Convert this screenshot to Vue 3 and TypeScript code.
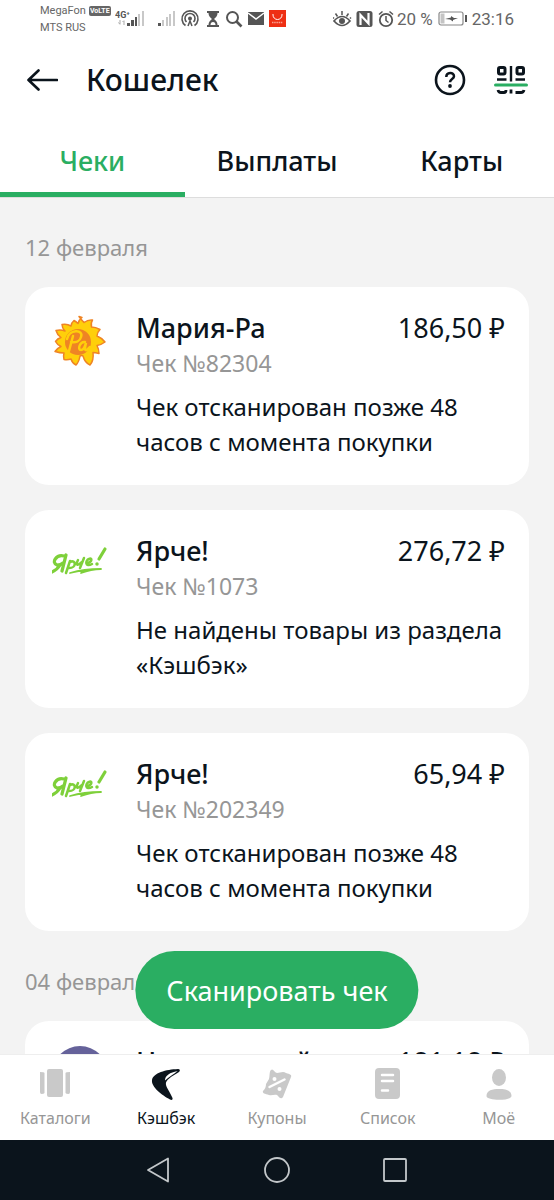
<script setup lang="ts">
import { ref } from 'vue'

type Brand = 'maria' | 'yarche' | 'plain'

interface Receipt {
  id: number
  brand: Brand
  store: string
  number: string
  amount: string
  message: string
}

interface ReceiptGroup {
  date: string
  receipts: Receipt[]
}

const tabs: string[] = ['Чеки', 'Выплаты', 'Карты']
const activeTab = ref<string>('Чеки')

const groups: ReceiptGroup[] = [
  {
    date: '12 февраля',
    receipts: [
      { id: 1, brand: 'maria', store: 'Мария-Ра', number: '82304', amount: '186,50 ₽', message: 'Чек отсканирован позже 48 часов с момента покупки' },
      { id: 2, brand: 'yarche', store: 'Ярче!', number: '1073', amount: '276,72 ₽', message: 'Не найдены товары из раздела «Кэшбэк»' },
      { id: 3, brand: 'yarche', store: 'Ярче!', number: '202349', amount: '65,94 ₽', message: 'Чек отсканирован позже 48 часов с момента покупки' },
    ],
  },
  {
    date: '04 февраля',
    receipts: [
      { id: 4, brand: 'plain', store: 'Новоторский', number: '1048', amount: '181,18 ₽', message: 'Чек отсканирован позже 48 часов с момента покупки' },
    ],
  },
]

const sections: string[] = ['Каталоги', 'Кэшбэк', 'Купоны', 'Список', 'Моё']
const activeSection = ref<string>('Кэшбэк')
</script>

<template>
  <div class="screen">
    <div class="status">
      <div class="carriers">
        <div class="carrier">MegaFon <span class="volte">VoLTE</span></div>
        <div class="carrier">MTS RUS</div>
      </div>
      <svg class="signals" width="172" height="22" viewBox="0 0 172 22">
        <text x="0" y="10" class="net">4G⁺</text>
        <path d="M5 12v4M3.500 14.500 5 16.500M9 17v-4M7.500 14 9 12.500" stroke="#aaa" fill="none" />
        <g fill="#555"><path d="M12 15h3v3h-3zM16 12h3v6h-3zM20 9h2v9h-2z" /></g>
        <path d="M23 6h2v12h-2zM27 3h2v15h-2z" fill="#c8c8c8" />
        <path d="M43 15h3v3h-3z" fill="#555" />
        <path d="M47 12h2v6h-2zM51 9h2v9h-2zM54 6h2v12h-2zM58 3h2v15h-2z" fill="#c8c8c8" />
        <g fill="none" stroke="#555" stroke-width="1.600">
          <path d="M70.500 17.500a8 8 0 1 1 9 0M71.500 14a5 5 0 1 1 7 0" />
          <path d="M73 18l2-5 2 5" stroke-width="1.500" />
        </g>
        <circle cx="75" cy="10.500" r="2" fill="#555" />
        <path d="M92 3h12v2h-1.500c0 3-1.500 4.500-3.500 6 2 1.500 3.500 3 3.500 6h1.500v2H92v-2h1.500c0-3 1.500-4.500 3.500-6-2-1.500-3.500-3-3.500-6H92z" fill="#555" />
        <path d="M95.500 17c0-2 1-3 2.500-3s2.500 1 2.500 3z" fill="#fff" />
        <circle cx="117.500" cy="9.500" r="5.500" fill="none" stroke="#555" stroke-width="2" />
        <path d="m121.500 13.500 5 5" stroke="#555" stroke-width="2.600" />
        <path d="M133 4h16v13h-16z" fill="#555" />
        <path d="m133 5 8 6 8-6" fill="none" stroke="#fff" stroke-width="1.500" />
        <path d="M154 2h17v17h-17z" fill="#ee2f14" />
        <path d="M158 6v1a4.500 4.500 0 0 0 9 0V6" fill="none" stroke="#fff" />
        <path d="M157 14.500h11" stroke="#f9a08f" stroke-width="1.500" stroke-dasharray="1.500 .7" />
      </svg>
      <svg class="toggles" width="62" height="20" viewBox="0 0 62 20">
        <path d="M1 12q8-9 16 0-8 9-16 0z" fill="none" stroke="#555" stroke-width="1.700" />
        <circle cx="9" cy="12" r="3" fill="#555" />
        <path d="M9 6V2M4.500 7.500 2.500 4.500M13.500 7.500l2-3M1 9.500l-1-1M17 9.500l1-1" stroke="#555" stroke-width="1.500" />
        <rect x="23.500" y="2" width="16" height="16" rx="2.500" fill="#555" />
        <path d="M27.500 16V6l8 8.500V4" fill="none" stroke="#fff" stroke-width="2.200" />
        <circle cx="53" cy="11" r="6.200" fill="none" stroke="#555" stroke-width="1.800" />
        <path d="M53 7v4.500l2.500 2M46 5.500l3.500-3M60 5.500l-3.500-3" fill="none" stroke="#555" stroke-width="1.500" />
      </svg>
      <span class="percent">20 %</span>
      <svg class="battery" width="30" height="16" viewBox="0 0 30 16">
        <rect x="1" y="1" width="24" height="13" rx="2" fill="none" stroke="#888" stroke-width="1.200" />
        <path d="M2.500 2.500h4v10h-4z" fill="#c4c4c4" />
        <path d="M27 4h2v7h-2z" fill="#555" />
        <path d="m7 8 6-1.500V5l3 2h4l-5 2v1.500L12 8.500z" fill="#555" />
      </svg>
      <span class="clock">23:16</span>
    </div>

    <header class="header">
      <button class="icon-button" type="button" aria-label="Назад">
        <svg width="32" height="24" viewBox="0 0 32 24"><path d="M31 12H3M12.500 2.500 2.500 12l10 9.500" fill="none" stroke="#0b141c" stroke-width="2.600" stroke-linecap="round" stroke-linejoin="round" /></svg>
      </button>
      <h1 class="title">Кошелек</h1>
      <button class="icon-button" type="button" aria-label="Помощь">
        <svg width="32" height="32" viewBox="0 0 32 32">
          <circle cx="16" cy="16" r="14" fill="none" stroke="#0b141c" stroke-width="2.600" />
          <path d="M12.300 13c0-5.300 7.700-5.300 7.700-.8 0 2.900-4 2.600-4 6" fill="none" stroke="#0b141c" stroke-width="2.500" />
          <circle cx="16" cy="22" r="1.900" fill="#0b141c" />
        </svg>
      </button>
      <button class="icon-button scan-icon" type="button" aria-label="Сканировать">
        <svg width="34" height="30" viewBox="0 0 34 30">
          <g fill="none" stroke="#0b141c" stroke-width="3">
            <rect x="4.500" y="2.500" width="6.500" height="6.500" rx="1.500" />
            <rect x="23" y="2.500" width="6.500" height="6.500" rx="1.500" />
            <path d="M17 1v15.500M3 14.500h9.500M21.500 14.500H31" stroke-width="2.400" />
            <path d="M4 25q.5 2.500 3 2.500h3q2 0 2-2.500M17 24.500v4M30 25q-.5 2.500-3 2.500h-5.500" stroke-width="2.800" />
          </g>
          <path d="M1.500 20h31" stroke="#2aae62" stroke-width="3" stroke-linecap="round" />
        </svg>
      </button>
    </header>

    <nav class="tabs">
      <button v-for="tab in tabs" :key="tab" type="button" class="tab" :class="{ active: tab === activeTab }" @click="activeTab = tab">{{ tab }}</button>
    </nav>

    <main class="content">
      <section v-for="group in groups" :key="group.date">
        <h2 class="date">{{ group.date }}</h2>
        <div class="cards">
          <article v-for="receipt in group.receipts" :key="receipt.id" class="card">
            <svg class="logo" viewBox="0 0 56 56">
              <template v-if="receipt.brand === 'maria'">
                <path d="M28 4.500q2 3 5 6 4-3 8.500-2.500-2 3-1 7 4 0 8.500 2.500-3 3-3 6.500 5 2 8 6-4 3-8 3.500 2 4 2 8-4-1-6-1 1 8-3 12.500-5-2-7-9-1-1-3 0-1 6-4 9-4-2-5-6-3 1-7 .5-1-3 0-6.500-4 0-9-1.500 2-3 6-5-4-2-5.500-5 2-3 5.500-4-4-3-5-7 5-1 9 .5-3-3-3-6.500 5-1 9 1.500 0-3 3-5.500 2 1 4 3 1-4 4-6z" transform="translate(-1 0)" fill="#ffcf0a" stroke="#ef8424" stroke-width="1.500" stroke-linejoin="round" />
                <circle cx="26" cy="30" r="13" fill="#ef8424" />
                <path d="M21 24l-4 15M15 27c2-10 17-10 14-2-1 4-5 6-10 5M33 30c-5-1-8 8-4 8 3 0 4-4 5-7-1 4-2 8 1 7l3-3" fill="none" stroke="#ffcf0a" stroke-width="2.500" stroke-linecap="round" />
              </template>
              <template v-else-if="receipt.brand === 'yarche'">
                <g transform="translate(-2 3)" fill="none" stroke="#7ed03a" stroke-linecap="round" stroke-linejoin="round">
                  <path d="M2 34q5-2 8-7M14 18c-8-2-13 7-7 9 3 0 5-1 6-2M16 17l-4 16" stroke-width="3.200" />
                  <path d="M20 23l-4 12M20 24c6-3 7 6-1 6M28 22c-3 6 0 6 4 2M34 20l-4 10M37 25c6-1 5-6 2-4-4 1-4 9 3 5" stroke-width="2.500" />
                  <path d="M55 11l-6 10" stroke-width="3.200" />
                  <path d="M47 26v.1" stroke-width="3.500" />
                  <path d="M20 35q14-4 31-4-10 0-20 4" stroke-width="1.800" />
                </g>
              </template>
              <circle v-else cx="28" cy="28" r="28" fill="#65629a" />
            </svg>
            <div class="details">
              <div class="line">
                <h3 class="store">{{ receipt.store }}</h3>
                <span class="amount">{{ receipt.amount }}</span>
              </div>
              <p class="number">Чек №{{ receipt.number }}</p>
              <p class="message">{{ receipt.message }}</p>
            </div>
          </article>
        </div>
      </section>
      <button class="scan" type="button">Сканировать чек</button>
    </main>

    <nav class="sections">
      <button v-for="(section, index) in sections" :key="section" type="button" class="section" :class="{ active: section === activeSection }" @click="activeSection = section">
        <svg width="34" height="34" viewBox="0 0 34 34" fill="currentColor">
          <template v-if="index === 0">
            <rect x="9" y="2" width="16" height="28" rx="2" />
            <path d="M2 5q4 0 4.500 1v20q-.5 1-3 1Q2 27 2 25zM32 5q-4 0-4.500 1v20q.5 1 3 1 1.500 0 1.500-2z" />
          </template>
          <template v-else-if="index === 1">
            <path d="M3 13C4 6 17 2.500 29 2c2 0 2.500 1.500 1 3-5 3-12 7-13 10.500-1 4 4 9 6.500 15.500.5 2-1 2.500-2.500 1.500C13 28 2 20 3 13z" />
            <path d="M16 13.500c0-5 5-8 12.500-9.500-3 3-9 6-12.500 9.500z" fill="#fff" />
          </template>
          <template v-else-if="index === 2">
            <path d="M11 3c2-2 3 2 6 3 3 0 6-2 9 0 4 1 6 2 5 4l-8 20c-2 3-4 0-6-2-3-1-5 1-8 0-4-1-7-2-6-4 2-2 3-4 3-7l3-5c1-3 0-7 2-9z" />
            <path d="m9.500 20 15-7.500" stroke="#fff" stroke-width="2.500" stroke-linecap="round" />
            <circle cx="14.500" cy="12" r="2" fill="#fff" /><circle cx="19.500" cy="22" r="2" fill="#fff" />
          </template>
          <template v-else-if="index === 3">
            <rect x="4" y="1" width="25" height="31" rx="4" />
            <path d="M11 8h11M11 14h11M11 23.500h6" stroke="#fff" stroke-width="2.500" stroke-linecap="round" />
          </template>
          <template v-else>
            <ellipse cx="17" cy="10.500" rx="7" ry="8.500" />
            <path d="M4.500 29c0-6 6-7 12.500-7s12.500 1 12.500 7c0 5-25 5-25 0z" />
          </template>
        </svg>
        <span>{{ section }}</span>
      </button>
    </nav>

    <div class="system">
      <button class="icon-button" type="button" aria-label="Системная кнопка назад">
        <svg width="26" height="28" viewBox="0 0 26 28"><path d="M22 2.500v23L2 14z" fill="none" stroke="#c3c7ca" stroke-width="1.800" stroke-linejoin="round" /></svg>
      </button>
      <button class="icon-button" type="button" aria-label="Домой">
        <svg width="28" height="28" viewBox="0 0 28 28"><circle cx="14" cy="14" r="12" fill="none" stroke="#c3c7ca" stroke-width="1.800" /></svg>
      </button>
      <button class="icon-button" type="button" aria-label="Недавние">
        <svg width="26" height="28" viewBox="0 0 26 28"><rect x="2" y="3" width="22" height="22" rx="1" fill="none" stroke="#c3c7ca" stroke-width="1.800" /></svg>
      </button>
    </div>
  </div>
</template>

<style>
body {
  margin: 0;
}
</style>

<style scoped>
.screen {
  display: flex;
  flex-direction: column;
  height: 100vh;
  overflow: hidden;
  background: #fff;
  color: #0b141c;
  font-family: "Noto Sans", sans-serif;
}
button {
  padding: 0;
  border: 0;
  background: none;
  color: inherit;
  font: inherit;
}
h1, h2, h3, p {
  margin: 0;
}
svg {
  display: block;
  flex: none;
}
.status {
  display: flex;
  align-items: center;
  box-sizing: border-box;
  height: 38px;
  padding: 0 40px;
  font-family: Roboto, sans-serif;
  color: #666;
}
.carriers {
  width: 75px;
  font-size: 11px;
  line-height: 17px;
}
.carrier {
  display: flex;
  align-items: center;
  gap: 3px;
  white-space: nowrap;
}
.volte {
  border-radius: 2px;
  background: #666;
  color: #fff;
  font-size: 7px;
  font-weight: 700;
  line-height: 10px;
  padding: 0 1px;
}
.net {
  font: 700 9px Roboto, sans-serif;
  fill: #555;
}
.toggles {
  margin-left: auto;
}
.percent,
.clock {
  font-size: 17px;
  white-space: nowrap;
}
.percent {
  margin: 0 5px 0 2px;
}
.clock {
  margin-left: 4px;
}
.header {
  display: flex;
  align-items: center;
  height: 84px;
  padding: 0 26px;
}
.title {
  flex: 1;
  margin-left: 28px;
  font-size: 30px;
  font-weight: 500;
  line-height: 40px;
}
.scan-icon {
  margin-left: 28px;
}
.tabs {
  display: flex;
  height: 75px;
  border-bottom: 1px solid #ddd;
}
.tab {
  flex: 1;
  padding-top: 6px;
  border-bottom: 5px solid transparent;
  font-size: 27px;
  font-weight: 500;
}
.tab.active {
  border-color: #2aae62;
  color: #2aae62;
}
.content {
  position: relative;
  flex: 1;
  min-height: 0;
  overflow: hidden;
  padding: 0 25px;
  background: #f3f3f3;
}
.date {
  padding: 33px 0 24px;
  color: #969696;
  font-size: 22px;
  font-weight: 400;
  line-height: 32px;
}
.cards {
  display: flex;
  flex-direction: column;
  gap: 25px;
  padding-bottom: 1px;
}
.card {
  display: flex;
  gap: 28px;
  padding: 22px 24px 26px 27px;
  border-radius: 24px;
  background: #fff;
}
.logo {
  width: 56px;
  height: 56px;
  margin-top: 3px;
}
.details {
  flex: 1;
  min-width: 0;
}
.line {
  display: flex;
  justify-content: space-between;
  font-size: 27px;
  line-height: 38px;
  white-space: nowrap;
}
.store {
  font-size: 27px;
  font-weight: 500;
}
.number {
  color: #969696;
  font-size: 23px;
  line-height: 32px;
}
.message {
  margin-top: 10px;
  font-size: 24px;
  line-height: 35px;
}
.scan {
  position: absolute;
  bottom: 25px;
  left: 50%;
  height: 78px;
  padding: 0 31px;
  border-radius: 39px;
  background: #2aae62;
  color: #fff;
  font-size: 27px;
  white-space: nowrap;
  transform: translateX(-50%);
}
.sections {
  display: flex;
  height: 85px;
  border-top: 1px solid #eee;
}
.section {
  display: flex;
  flex: 1;
  flex-direction: column;
  align-items: center;
  justify-content: flex-start;
  gap: 5px;
  padding-top: 12px;
  color: #c9c9c9;
  font-size: 16px;
  line-height: 24px;
}
.section span {
  color: #969696;
}
.section.active,
.section.active span {
  color: #0b141c;
}
.system {
  display: flex;
  align-items: center;
  justify-content: center;
  gap: 91px;
  height: 60px;
  background: #0b141c;
}
</style>
